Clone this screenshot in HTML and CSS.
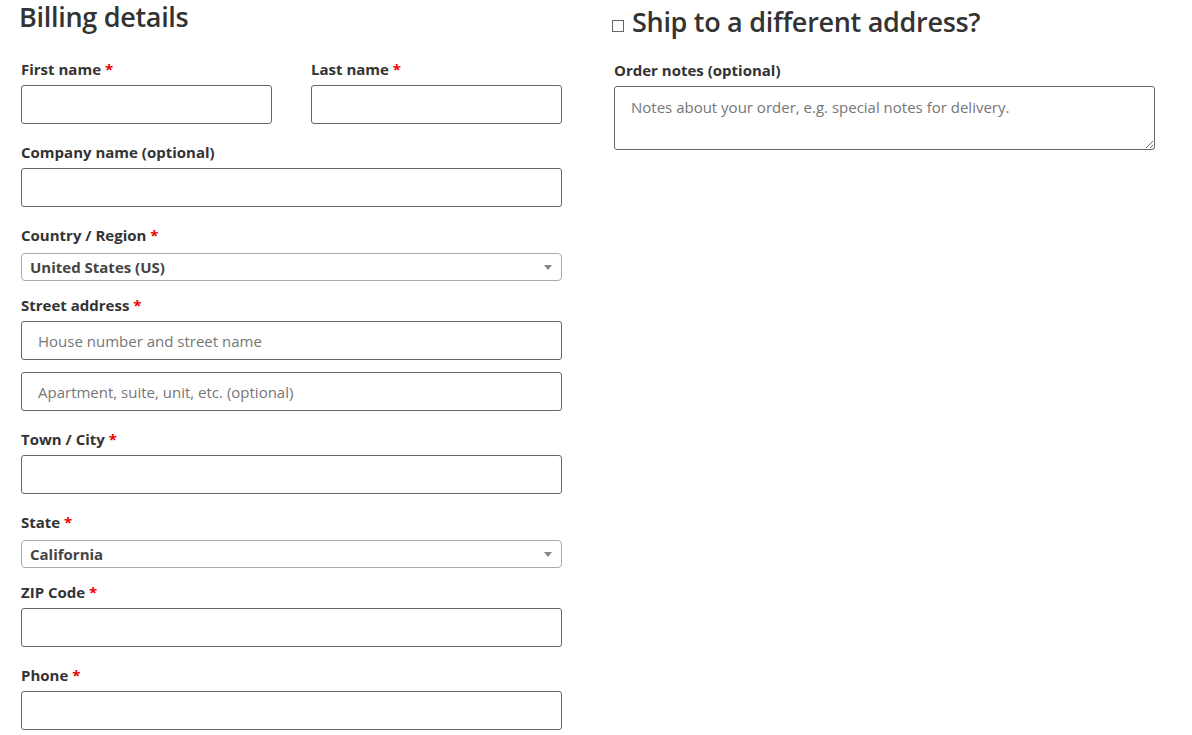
FILE: index.html
```html
<!DOCTYPE html>
<html lang="en">
<head>
<meta charset="utf-8">
<title>Checkout</title>
<link rel="stylesheet" href="styles.css">
</head>
<body>
<div class="page">
  <div class="col">
    <h3 class="heading">Billing details</h3>
    <div class="pair">
      <div class="row">
        <label class="lbl">First name <abbr class="req">*</abbr></label>
        <input class="field" type="text">
      </div>
      <div class="row">
        <label class="lbl">Last name <abbr class="req">*</abbr></label>
        <input class="field" type="text">
      </div>
    </div>
    <div class="row">
      <label class="lbl">Company name (optional)</label>
      <input class="field" type="text">
    </div>
    <div class="row row-select">
      <label class="lbl">Country / Region <abbr class="req">*</abbr></label>
      <div class="select"><span class="select-text">United States (US)</span><b class="arrow"></b></div>
    </div>
    <div class="row">
      <label class="lbl">Street address <abbr class="req">*</abbr></label>
      <input class="field" type="text" placeholder="House number and street name">
      <input class="field field-second" type="text" placeholder="Apartment, suite, unit, etc. (optional)">
    </div>
    <div class="row">
      <label class="lbl">Town / City <abbr class="req">*</abbr></label>
      <input class="field" type="text">
    </div>
    <div class="row row-select">
      <label class="lbl">State <abbr class="req">*</abbr></label>
      <div class="select"><span class="select-text">California</span><b class="arrow"></b></div>
    </div>
    <div class="row">
      <label class="lbl">ZIP Code <abbr class="req">*</abbr></label>
      <input class="field" type="text">
    </div>
    <div class="row">
      <label class="lbl">Phone <abbr class="req">*</abbr></label>
      <input class="field" type="tel">
    </div>
  </div>
  <div class="col">
    <h3 class="heading heading-ship"><input class="check" type="checkbox"><span>Ship to a different address?</span></h3>
    <div class="row row-notes">
      <label class="lbl">Order notes (optional)</label>
      <textarea class="notes" placeholder="Notes about your order, e.g. special notes for delivery."></textarea>
    </div>
  </div>
</div>
</body>
</html>
```
FILE: styles.css
```css
html, body {
  margin: 0;
  padding: 0;
  background: #fff;
}
body {
  font-family: "Open Sans", "Noto Sans", sans-serif;
  color: #333;
}
.page {
  display: grid;
  grid-template-columns: 541px 541px;
  column-gap: 52px;
  padding: 0 21px;
}
.col {
  display: flex;
  flex-direction: column;
}
.heading {
  margin: 0 0 24px -2px;
  font-size: 27px;
  line-height: 34px;
  font-weight: 600;
  letter-spacing: -0.3px;
  color: #333;
}
.heading-ship {
  margin: 5px 0 20px -2px;
  display: flex;
  align-items: baseline;
}
.check {
  appearance: none;
  -webkit-appearance: none;
  width: 12px;
  height: 12px;
  margin: 0 8px 0 0;
  border: 1px solid #666;
  background: #fff;
  align-self: flex-end;
  position: relative;
  top: -7px;
}
.pair {
  display: flex;
  justify-content: space-between;
}
.pair .row {
  width: 251px;
}
.row {
  display: flex;
  flex-direction: column;
  margin-bottom: 17px;
}
.row-select {
  margin-bottom: 13px;
}
.lbl {
  display: block;
  font-size: 15px;
  line-height: 22px;
  font-weight: 700;
  color: #333;
  margin-bottom: 5px;
}
.row-select .lbl {
  margin-bottom: 7px;
}
.row-notes .lbl {
  margin-bottom: 5px;
}
.req {
  color: #e00;
  text-decoration: none;
  border: 0;
  font-weight: 700;
}
.field {
  box-sizing: border-box;
  width: 100%;
  height: 39px;
  margin: 0;
  padding: 0 16px;
  border: 1px solid #666;
  border-radius: 3px;
  background: #fff;
  font-family: "Open Sans", "Noto Sans", sans-serif;
  font-size: 15px;
  color: #333;
  outline: none;
}
.field::placeholder,
.notes::placeholder {
  color: #767676;
}
.field-second {
  margin-top: 12px;
}
.select {
  box-sizing: border-box;
  height: 28px;
  border: 1px solid #aaa;
  border-radius: 4px;
  display: flex;
  align-items: center;
  justify-content: space-between;
  padding: 0 9px 0 8px;
}
.select-text {
  font-size: 15px;
  font-weight: 700;
  color: #444;
  line-height: 26px;
}
.arrow {
  width: 0;
  height: 0;
  border-style: solid;
  border-width: 5px 4px 0 4px;
  border-color: #888 transparent transparent transparent;
}
.notes {
  box-sizing: border-box;
  width: 100%;
  height: 64px;
  margin: 0;
  padding: 9px 16px;
  border: 1px solid #666;
  border-radius: 3px;
  font-family: "Open Sans", "Noto Sans", sans-serif;
  font-size: 15px;
  line-height: 22px;
  color: #333;
  resize: vertical;
  outline: none;
}
```
